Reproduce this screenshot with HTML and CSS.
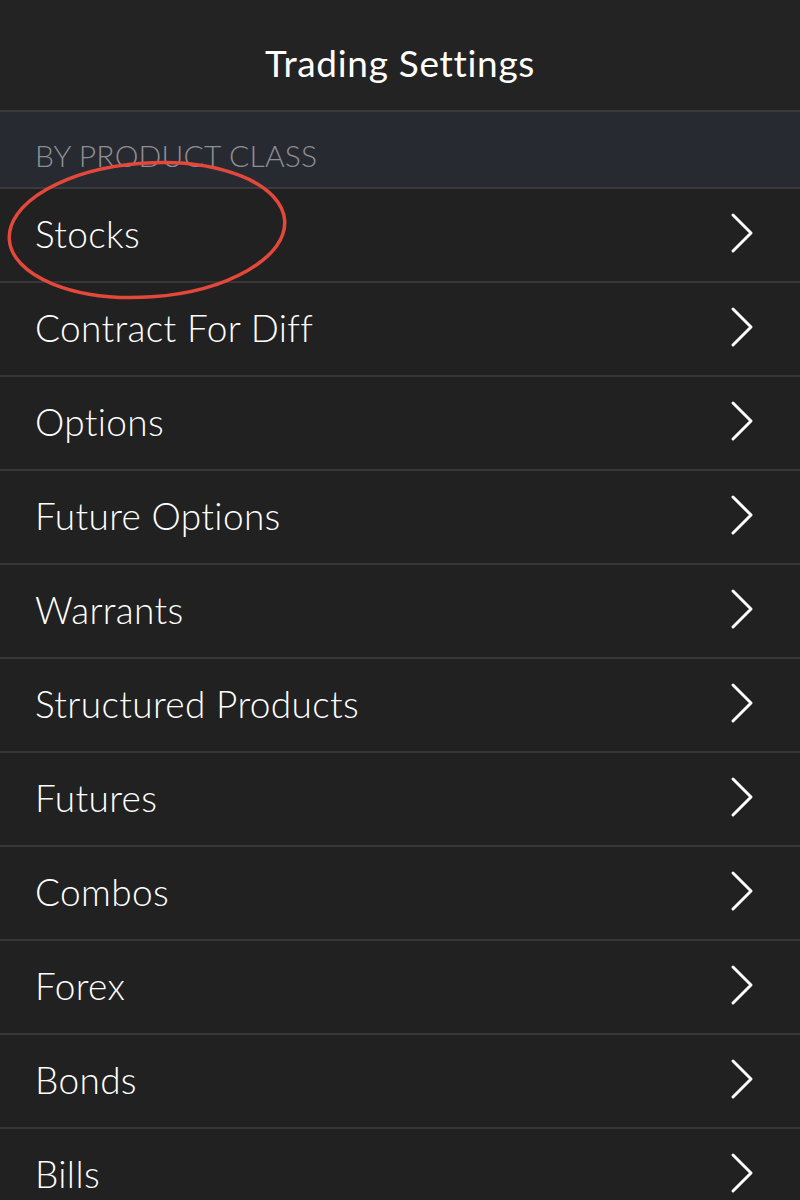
FILE: index.html
```html
<!DOCTYPE html>
<html lang="en">
<head>
  <meta charset="UTF-8">
  <meta name="viewport" content="width=device-width, initial-scale=1.0">
  <title>Trading Settings</title>
  <link rel="stylesheet" href="styles.css">
</head>
<body>
  <div class="screen">
    <header class="topbar">Trading Settings</header>
    <div class="section">BY PRODUCT CLASS</div>
    <ul class="list">
      <li class="row">Stocks<span class="chev"></span></li>
      <li class="row">Contract For Diff<span class="chev"></span></li>
      <li class="row">Options<span class="chev"></span></li>
      <li class="row">Future Options<span class="chev"></span></li>
      <li class="row">Warrants<span class="chev"></span></li>
      <li class="row">Structured Products<span class="chev"></span></li>
      <li class="row">Futures<span class="chev"></span></li>
      <li class="row">Combos<span class="chev"></span></li>
      <li class="row">Forex<span class="chev"></span></li>
      <li class="row">Bonds<span class="chev"></span></li>
      <li class="row">Bills<span class="chev"></span></li>
    </ul>

    <!-- hand-drawn highlight round "Stocks" -->
    <svg class="circle" width="290" height="150" viewBox="0 0 290 150">
      <ellipse cx="144" cy="76" rx="138" ry="67" transform="rotate(-4 144 76)" fill="none" stroke="#e3483b" stroke-width="3.5"/>
    </svg>
  </div>

  <script>
    document.querySelectorAll('.chev').forEach(el => {
      el.innerHTML = '<svg width="26" height="42" viewBox="0 0 26 42"><path d="M3 3 L21 21 L3 39" fill="none" stroke="#fff" stroke-width="3" stroke-linecap="round" stroke-linejoin="round"/></svg>';
    });
  </script>
</body>
</html>
```

FILE: styles.css
```css
body {
  margin: 0;
  background-color: #212121;
  font-family: Lato, "Noto Sans", sans-serif;
  font-weight: 300;
  color: #fff;
}
.screen {
  position: relative;
  width: 800px;
  height: 1200px;
  overflow: hidden;
}
.topbar {
  height: 112px;
  box-sizing: border-box;
  background-color: #232323;
  border-bottom: 2px solid #3a3a3c;
  display: flex;
  align-items: center;
  justify-content: center;
  padding-top: 14px;
  font-size: 37px;
  font-weight: 400;
  letter-spacing: 0.7px;
}
.section {
  height: 77px;
  background-color: #282a32;
  border-bottom: 2px solid #3a3a3c;
  box-sizing: border-box;
  padding: 25px 0 0 35px;
  font-size: 30px;
  letter-spacing: 0.2px;
  color: #8f8f92;
}
.list {
  list-style: none;
  margin: 0;
  padding: 0;
}
.row {
  height: 94px;
  box-sizing: border-box;
  border-bottom: 2px solid #37373a;
  display: flex;
  align-items: center;
  justify-content: space-between;
  padding: 0 44px 4px 35px;
  font-size: 37px;
  letter-spacing: 0.35px;
}
.chev {
  display: flex;
}
.circle {
  position: absolute;
  left: 3px;
  top: 154px;
}
```
